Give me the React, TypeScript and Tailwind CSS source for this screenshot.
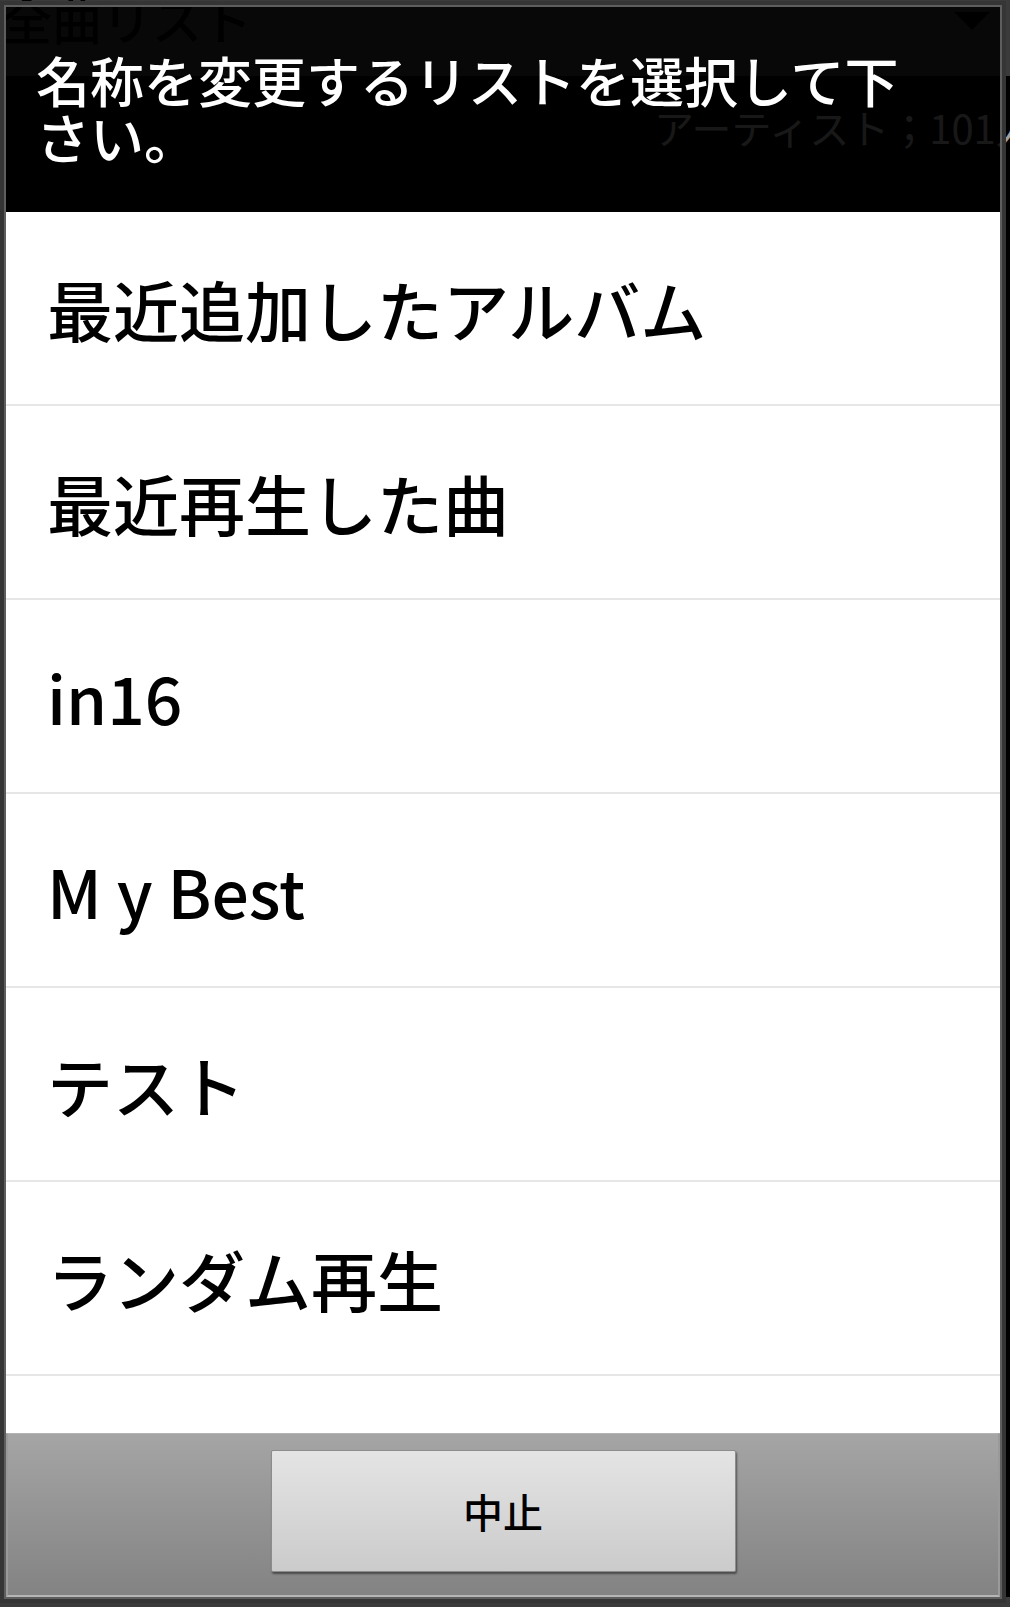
const lists = ["最近追加したアルバム", "最近再生した曲", "in16", "M y Best", "テスト", "ランダム再生"];

const font = { fontFamily: '"Noto Sans CJK JP", "Noto Sans", sans-serif' };

export default function App() {
  return (
    <div className="relative w-[1010px] h-[1607px] overflow-hidden bg-black" style={font}>
      <BackgroundScreen />
      <RenameDialog />
    </div>
  );
}

// the music app behind the dialog, mostly hidden
function BackgroundScreen() {
  return (
    <div className="flex flex-col h-full">
      <div className="flex justify-between h-[76px] bg-[#3b3b3b] overflow-hidden">
        <span className="mt-[-7px] pl-[2px] text-[50px] leading-[50px] font-medium text-black">全曲リスト</span>
        <svg width="36" height="18" viewBox="0 0 36 18" className="mt-[12px] mr-[20px]">
          <polygon points="0,0 36,0 18,18" fill="#000" />
        </svg>
      </div>
      <div className="flex h-[80px] pt-[27px] overflow-hidden">
        <span className="whitespace-nowrap pl-[654px] text-[40px] leading-[48px] text-[#a0a0a0]">アーティスト；101人</span>
      </div>
      <div className="flex-1" />
      <div className="h-[10px] bg-[#3b3b3b]" />
    </div>
  );
}

function RenameDialog() {
  return (
    <div className="absolute left-[4px] top-[5px] w-[998px] h-[1594px] flex flex-col border-2 border-[#5e5e5e] shadow-[0_0_0_4px_#353535]">
      <div className="h-[205px] shrink-0 bg-black/85 pt-[44px] pl-[30px] pr-[60px]">
        <h1 className="text-[54px] leading-[57px] font-medium text-white">名称を変更するリストを選択して下さい。</h1>
      </div>
      <ul className="flex-1 overflow-hidden bg-white">
        {lists.map((name) => (
          <li
            key={name}
            className="flex items-center h-[194px] pl-[41px] border-b-2 border-[#e6e6e6] text-[66px] leading-none font-medium text-black"
          >
            {name}
          </li>
        ))}
      </ul>
      <div className="h-[164px] shrink-0 flex justify-center pt-[16px] bg-gradient-to-b from-[#a5a5a5] to-[#838383] border-t border-x-2 border-b-2 border-t-[#b3b3b3] border-x-[#9a9a9a] border-b-[#b5b5b5]">
        <button className="w-[465px] h-[122px] rounded-[2px] border border-[#8c8c8c] bg-gradient-to-b from-[#e4e4e4] to-[#cbcbcb] shadow-[1px_2px_2px_rgba(0,0,0,0.45)] text-[40px] leading-none font-medium text-black">
          中止
        </button>
      </div>
    </div>
  );
}
